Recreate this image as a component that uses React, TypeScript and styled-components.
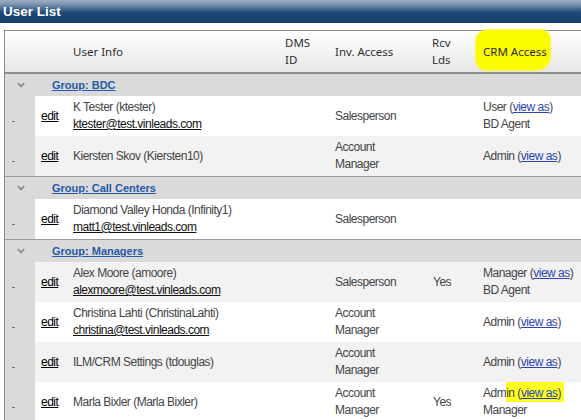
import React from 'react';
import styled, { createGlobalStyle } from 'styled-components';

const GlobalStyle = createGlobalStyle`
  html, body { margin: 0; padding: 0; background: #fff; overflow: hidden; }
  body { font-family: "Liberation Sans", Arial, sans-serif; }
`;

const Page = styled.div`
  width: 581px;
`;

const TitleBar = styled.div`
  height: 23px;
  display: flex;
  align-items: center;
  padding-left: 3px;
  background: linear-gradient(to bottom, #9aadc2 0%, #7f97b2 18%, #3a6089 42%, #1d4774 58%, #163f6b 100%);
  color: #fff;
  font: bold 13.5px "Liberation Sans", Arial, sans-serif;
`;

const Body = styled.div`
  padding: 7px 0 0 4px;
`;

const Table = styled.table`
  width: 577px;
  table-layout: fixed;
  border-collapse: separate;
  border-spacing: 0;
  border-top: 1px solid #8c8c8c;
  border-left: 1px solid #8c8c8c;
  font-size: 12px;
  letter-spacing: -0.5px;
  color: #444;
`;

const HeadCell = styled.th<{ $pl?: number }>`
  text-align: left;
  font: normal 11.5px "Noto Sans", "Liberation Sans", sans-serif;
  letter-spacing: 0;
  color: #2e2e2e;
  line-height: 17px;
  padding: 3px 0 4px ${(p) => p.$pl ?? 0}px;
  vertical-align: middle;
  background: linear-gradient(to bottom, #ffffff 0%, #f4f4f4 50%, #e6e6e6 100%);
  border-bottom: 2px solid #8c8c8c;
`;

const CrmMark = styled.span`
  position: relative;
  z-index: 0;
  &::before {
    content: '';
    position: absolute;
    z-index: -1;
    left: -7px;
    right: -3px;
    top: -14px;
    bottom: -11px;
    background: #fafa00;
    border-radius: 12px 9px 14px 11px;
    box-shadow: 0 0 2px 1px #f6f64a;
  }
`;

const GroupCell = styled.td<{ $top: boolean; $pl: number }>`
  background: #dadada;
  padding: 0 0 0 ${(p) => p.$pl}px;
  line-height: 22px;
  height: 22px;
  vertical-align: middle;
  border-top: ${(p) => (p.$top ? '1px solid #9a9a9a' : '0')};
`;

const Chevron = styled.svg`
  display: block;
`;

const GroupLink = styled.a`
  font: bold 11px "Liberation Sans", Arial, sans-serif;
  letter-spacing: 0;
  color: #2559a7;
  text-decoration: underline;
`;

const SideCell = styled.td`
  background: #dadada;
  padding: 3px 0 3px 7px;
  vertical-align: middle;
  line-height: 17px;
`;

const Cell = styled.td<{ $alt: boolean; $pl?: number }>`
  background: ${(p) => (p.$alt ? '#f2f2f2' : '#ffffff')};
  padding: 3px 0 3px ${(p) => p.$pl ?? 0}px;
  line-height: 17px;
  vertical-align: middle;
  white-space: nowrap;
  overflow: hidden;
`;

const DashLink = styled.a`
  color: #4f70a8;
  text-decoration: underline;
`;

const EditLink = styled.a`
  color: #000;
  text-decoration: underline;
`;

const Email = styled.a`
  color: #111;
  text-decoration: underline;
`;

const ViewAs = styled.a`
  color: #2a44b5;
  text-decoration: underline;
`;

const Marker = styled.span`
  background: #ffff22;
  padding: 4px 3px 2px 0;
`;

type Crm = { role: string; extra?: string; highlight?: boolean } | null;
type User = {
  name: string;
  email?: string;
  inv: string[];
  rcv?: string;
  crm: Crm;
};
type Group = { name: string; users: User[] };

const groups: Group[] = [
  {
    name: 'BDC',
    users: [
      { name: 'K Tester (ktester)', email: 'ktester@test.vinleads.com', inv: ['Salesperson'], crm: { role: 'User', extra: 'BD Agent' } },
      { name: 'Kiersten Skov (Kiersten10)', inv: ['Account', 'Manager'], crm: { role: 'Admin' } },
    ],
  },
  {
    name: 'Call Centers',
    users: [
      { name: 'Diamond Valley Honda (Infinity1)', email: 'matt1@test.vinleads.com', inv: ['Salesperson'], crm: null },
    ],
  },
  {
    name: 'Managers',
    users: [
      { name: 'Alex Moore (amoore)', email: 'alexmoore@test.vinleads.com', inv: ['Salesperson'], rcv: 'Yes', crm: { role: 'Manager', extra: 'BD Agent' } },
      { name: 'Christina Lahti (ChristinaLahti)', email: 'christina@test.vinleads.com', inv: ['Account', 'Manager'], crm: { role: 'Admin' } },
      { name: 'ILM/CRM Settings (tdouglas)', inv: ['Account', 'Manager'], crm: { role: 'Admin' } },
      { name: 'Marla Bixler (Marla Bixler)', inv: ['Account', 'Manager'], rcv: 'Yes', crm: { role: 'Admin', extra: 'Manager', highlight: true } },
    ],
  },
];

const CrmContent: React.FC<{ crm: Crm }> = ({ crm }) => {
  if (!crm) return null;
  const link = <ViewAs href="#">view as</ViewAs>;
  return (
    <>
      {crm.highlight ? (
        <>
          {crm.role.slice(0, 3)}
          <Marker>
            {crm.role.slice(3)} ({link})
          </Marker>
        </>
      ) : (
        <>
          {crm.role} ({link})
        </>
      )}
      {crm.extra && (
        <>
          <br />
          {crm.extra}
        </>
      )}
    </>
  );
};

export default function App() {
  let idx = 0;
  return (
    <Page>
      <GlobalStyle />
      <TitleBar>User List</TitleBar>
      <Body>
        <Table>
          <colgroup>
            <col style={{ width: 30 }} />
            <col style={{ width: 38 }} />
            <col style={{ width: 212 }} />
            <col style={{ width: 50 }} />
            <col style={{ width: 97 }} />
            <col style={{ width: 50 }} />
            <col style={{ width: 99 }} />
          </colgroup>
          <thead>
            <tr>
              <HeadCell />
              <HeadCell />
              <HeadCell>User Info</HeadCell>
              <HeadCell>
                DMS
                <br />
                ID
              </HeadCell>
              <HeadCell>Inv. Access</HeadCell>
              <HeadCell>
                Rcv
                <br />
                Lds
              </HeadCell>
              <HeadCell $pl={1}>
                <CrmMark>CRM Access</CrmMark>
              </HeadCell>
            </tr>
          </thead>
          <tbody>
            {groups.map((g, gi) => (
              <React.Fragment key={g.name}>
                <tr>
                  <GroupCell $top={gi > 0} $pl={12}>
                    <Chevron width="8" height="6" viewBox="0 0 8 6">
                      <polyline points="0.8,1 4,4.4 7.2,1" fill="none" stroke="#8a8a8a" strokeWidth="1.7" />
                    </Chevron>
                  </GroupCell>
                  <GroupCell $top={gi > 0} $pl={17} colSpan={6}>
                    <GroupLink href="#">Group: {g.name}</GroupLink>
                  </GroupCell>
                </tr>
                {g.users.map((u) => {
                  const alt = idx++ % 2 === 1;
                  return (
                    <tr key={u.name}>
                      <SideCell>
                        <DashLink href="#">&nbsp;</DashLink>
                      </SideCell>
                      <Cell $alt={alt} $pl={6}>
                        <EditLink href="#">edit</EditLink>
                      </Cell>
                      <Cell $alt={alt}>
                        {u.name}
                        {u.email && (
                          <>
                            <br />
                            <Email href="#">{u.email}</Email>
                          </>
                        )}
                      </Cell>
                      <Cell $alt={alt} />
                      <Cell $alt={alt}>
                        {u.inv.map((line, i) => (
                          <React.Fragment key={line}>
                            {i > 0 && <br />}
                            {line}
                          </React.Fragment>
                        ))}
                      </Cell>
                      <Cell $alt={alt} $pl={1}>{u.rcv}</Cell>
                      <Cell $alt={alt} $pl={1}>
                        <CrmContent crm={u.crm} />
                      </Cell>
                    </tr>
                  );
                })}
              </React.Fragment>
            ))}
          </tbody>
        </Table>
      </Body>
    </Page>
  );
}
